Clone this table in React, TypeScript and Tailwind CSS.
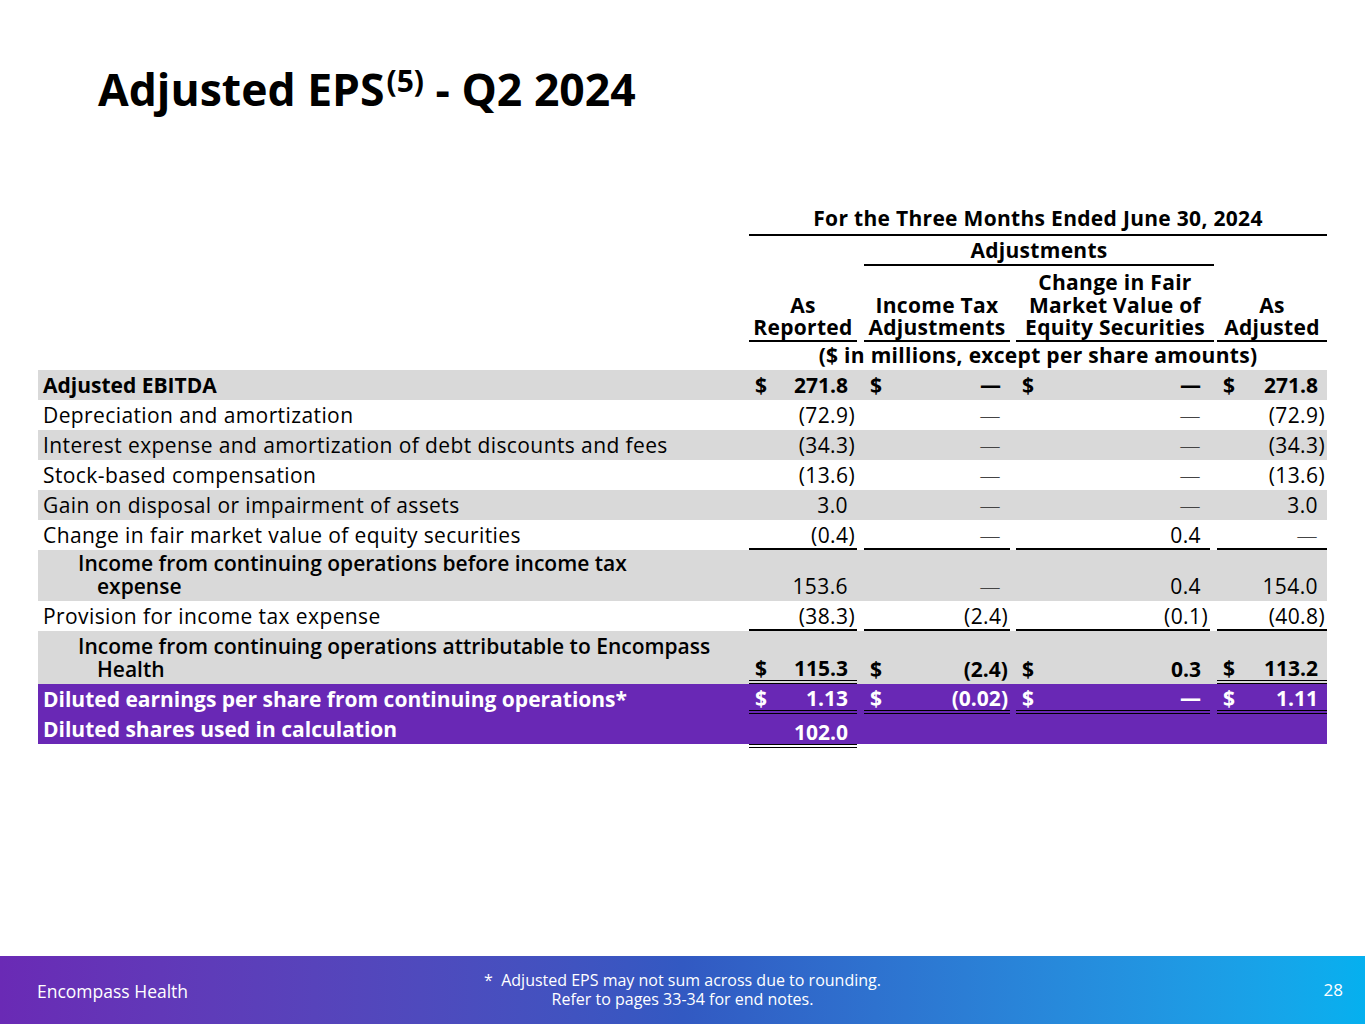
import React from "react";

type Cell = { d?: boolean; v: string };
type Row = {
  label: string[];
  cells: Cell[];
  tone: "gray" | "white" | "purple";
  weight: "normal" | "semi" | "bold";
  valueBold?: boolean;
  indent?: boolean;
  h: number;
  line?: "single" | "double";
  lineCols?: number[];
  overhang?: boolean;
};

const DASH = "—";

const rows: Row[] = [
  { label: ["Adjusted EBITDA"], tone: "gray", weight: "bold", valueBold: true, h: 30, cells: [{ d: true, v: "271.8" }, { d: true, v: DASH }, { d: true, v: DASH }, { d: true, v: "271.8" }] },
  { label: ["Depreciation and amortization"], tone: "white", weight: "normal", h: 30, cells: [{ v: "(72.9)" }, { v: DASH }, { v: DASH }, { v: "(72.9)" }] },
  { label: ["Interest expense and amortization of debt discounts and fees"], tone: "gray", weight: "normal", h: 30, cells: [{ v: "(34.3)" }, { v: DASH }, { v: DASH }, { v: "(34.3)" }] },
  { label: ["Stock-based compensation"], tone: "white", weight: "normal", h: 30, cells: [{ v: "(13.6)" }, { v: DASH }, { v: DASH }, { v: "(13.6)" }] },
  { label: ["Gain on disposal or impairment of assets"], tone: "gray", weight: "normal", h: 30, cells: [{ v: "3.0" }, { v: DASH }, { v: DASH }, { v: "3.0" }] },
  { label: ["Change in fair market value of equity securities"], tone: "white", weight: "normal", h: 30, line: "single", lineCols: [0, 1, 2, 3], cells: [{ v: "(0.4)" }, { v: DASH }, { v: "0.4" }, { v: DASH }] },
  { label: ["Income from continuing operations before income tax", "expense"], tone: "gray", weight: "semi", indent: true, h: 51, cells: [{ v: "153.6" }, { v: DASH }, { v: "0.4" }, { v: "154.0" }] },
  { label: ["Provision for income tax expense"], tone: "white", weight: "normal", h: 30, line: "single", lineCols: [0, 1, 2, 3], cells: [{ v: "(38.3)" }, { v: "(2.4)" }, { v: "(0.1)" }, { v: "(40.8)" }] },
  { label: ["Income from continuing operations attributable to Encompass", "Health"], tone: "gray", weight: "semi", valueBold: true, indent: true, h: 53, line: "double", lineCols: [0, 3], cells: [{ d: true, v: "115.3" }, { d: true, v: "(2.4)" }, { d: true, v: "0.3" }, { d: true, v: "113.2" }] },
  { label: ["Diluted earnings per share from continuing operations*"], tone: "purple", weight: "bold", valueBold: true, h: 30, line: "double", lineCols: [0, 1, 2, 3], cells: [{ d: true, v: "1.13" }, { d: true, v: "(0.02)" }, { d: true, v: DASH }, { d: true, v: "1.11" }] },
  { label: ["Diluted shares used in calculation"], tone: "purple", weight: "bold", valueBold: true, h: 30, line: "double", lineCols: [0], overhang: true, cells: [{ v: "102.0" }, { v: "" }, { v: "" }, { v: "" }] },
];

// value column widths incl. left gap
const colW = ["w-[108px]", "w-[153px]", "w-[200px]", "w-[117px]"];
const colPl = ["pl-0", "pl-[7px]", "pl-[6px]", "pl-[7px]"];

function ValueCell({ cell, i, row }: { cell: Cell; i: number; row: Row }) {
  const hasLine = row.line && row.lineCols?.includes(i);
  const closes = cell.v.endsWith(")") || cell.v === "";
  const isDash = cell.v === DASH;
  const lineCls = !hasLine
    ? "pb-[3px]"
    : row.line === "single"
    ? "border-b-2 border-black pb-[1px]"
    : "border-b-4 border-double border-black pb-0";
  const light = isDash && !row.valueBold;
  return (
    <div className={`${colW[i]} ${colPl[i]} h-full`}>
      <div
        className={`flex items-end justify-between ${lineCls} ${row.overhang ? "h-[34px]" : "h-full"} ${
          row.valueBold ? "font-bold tracking-normal" : "font-normal tracking-[0.4px]"
        }`}
      >
        <span className="pl-[6px]">{cell.d ? "$" : ""}</span>
        <span className={`${closes ? "pr-[2px]" : "pr-[9px]"} ${light ? "font-light text-[#444]" : ""}`}>
          {cell.v}
        </span>
      </div>
    </div>
  );
}

function TableRow({ row }: { row: Row }) {
  const bg =
    row.tone === "gray" ? "bg-[#d9d9d9]" : row.tone === "purple" ? "bg-[#6928b5] text-white" : "bg-white";
  const weight =
    row.weight === "bold" ? "font-bold" : row.weight === "semi" ? "font-semibold" : "font-normal tracking-[0.4px]";
  return (
    <div className={`flex ${bg}`} style={{ height: row.h }}>
      <div className={`w-[711px] flex items-end pb-[3px] whitespace-nowrap ${weight}`}>
        <span className={row.indent ? "pl-[59px] -indent-[19px]" : "pl-[5px]"}>
          {row.label.map((l, k) => (
            <React.Fragment key={k}>
              {k > 0 && <br />}
              {l}
            </React.Fragment>
          ))}
        </span>
      </div>
      {row.cells.map((c, i) => (
        <ValueCell key={i} cell={c} i={i} row={row} />
      ))}
    </div>
  );
}

export default function App() {
  return (
    <div className="w-[1365px] h-[1024px] flex flex-col bg-white text-black font-['Open_Sans',sans-serif] overflow-hidden">
      <h1 className="pl-[98px] pt-[60px] text-[44.5px] font-bold leading-[58px]">
        Adjusted EPS<sup className="text-[30px] relative -top-[14px] pl-[2px]">(5)</sup> - Q2 2024
      </h1>

      <div className="ml-[38px] mt-[87px] w-[1289px] text-[21px] leading-[23px]">
        {/* Header */}
        <div className="ml-[711px] w-[578px] font-bold text-center tracking-[0.3px]">
          <div className="border-b-2 border-black pb-[4px] pt-[2px]">For the Three Months Ended June 30, 2024</div>
          <div className="flex items-end">
            <div className="w-[108px] border-b-2 border-black pb-[1px] leading-[22.5px]">
              As
              <br />
              Reported
            </div>
            <div className="w-[360px] pl-[7px] pr-[3px]">
              <div className="border-b-2 border-black pt-[3px] pb-[2px]">Adjustments</div>
              <div className="flex items-end leading-[22.5px] pt-[5px]">
                <div className="w-[146px] border-b-2 border-black pb-[1px]">
                  Income Tax
                  <br />
                  Adjustments
                </div>
                <div className="w-[204px] pl-[6px]">
                  <div className="border-b-2 border-black pb-[1px]">
                    Change in Fair
                    <br />
                    Market Value of
                    <br />
                    Equity Securities
                  </div>
                </div>
              </div>
            </div>
            <div className="w-[110px] border-b-2 border-black pb-[1px] leading-[22.5px]">
              As
              <br />
              Adjusted
            </div>
          </div>
          <div className="pt-[2px] pb-[3px]">($ in millions, except per share amounts)</div>
        </div>

        {/* Body */}
        {rows.map((r, i) => (
          <TableRow key={i} row={r} />
        ))}
      </div>

      <footer className="mt-auto h-[68px] grid grid-cols-[1fr_auto_1fr] items-center pl-[37px] pr-[22px] text-white bg-gradient-to-r from-[#6a2ab5] via-[#3259c2] to-[#05b0ef]">
        <span className="text-[17.5px] pt-[2px]">Encompass Health</span>
        <div className="text-[16px] leading-[19px] text-center pr-[15px]">
          <div>*&nbsp; Adjusted EPS may not sum across due to rounding.</div>
          <div>Refer to pages 33-34 for end notes.</div>
        </div>
        <span className="text-[17px] text-right">28</span>
      </footer>
    </div>
  );
}
